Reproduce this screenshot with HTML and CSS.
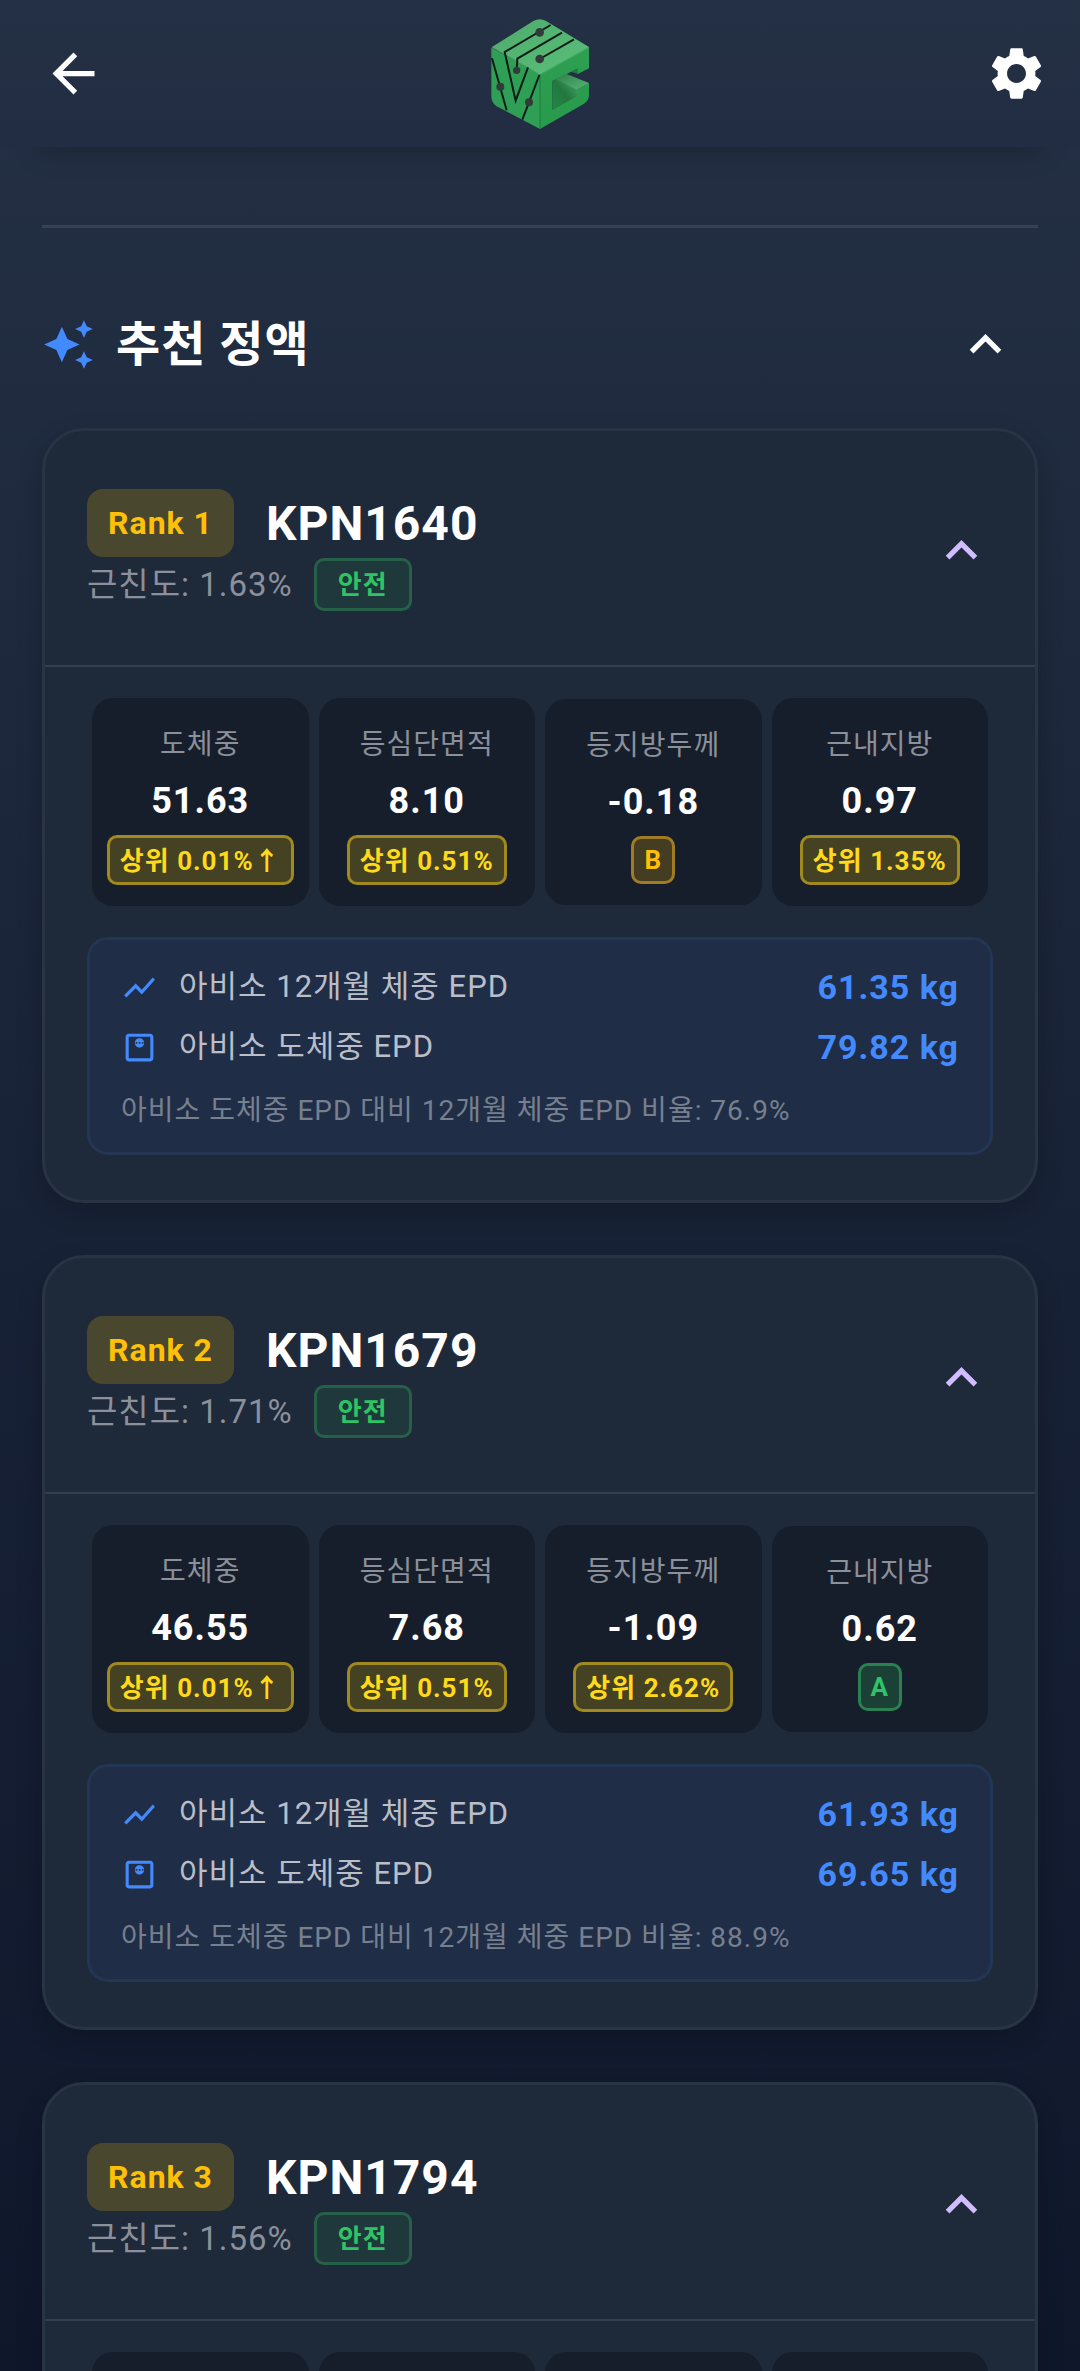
FILE: index.html
```html
<!DOCTYPE html>
<html lang="ko">
<head>
    <meta charset="UTF-8">
    <meta name="viewport" content="width=device-width, initial-scale=1.0">
    <title>추천 정액</title>
    <link rel="stylesheet" href="styles.css">
</head>
<body>
    <!-- shared icons -->
    <svg class="sprite" aria-hidden="true">
        <symbol id="icon-up" viewBox="0 0 24 24">
            <path d="M12 8l-6 6 1.41 1.41L12 10.83l4.59 4.58L18 14z"/>
        </symbol>
        <symbol id="icon-chart" viewBox="0 0 24 24">
            <path d="M3.5 18.49l6-6.01 4 4L22 6.92l-1.41-1.41-7.09 7.97-4-4L2 16.99z"/>
        </symbol>
        <symbol id="icon-weight" viewBox="0 0 24 24">
            <path d="M19 3H5c-1.100 0-2 .9-2 2v14c0 1.100.9 2 2 2h14c1.100 0 2-.9 2-2V5c0-1.100-.9-2-2-2zm0 16H5V5h14v14z"/>
            <path d="M12 6c-1.660 0-3 1.340-3 3s1.340 3 3 3 3-1.340 3-3-1.340-3-3-3zm-1.500 3.500h-1v-1h1v1zm2 0h-1v-1h1v1zm2 0h-1v-1h1v1z"/>
        </symbol>
    </svg>

    <div class="app">
        <header class="topbar">
            <button class="icon-btn back-btn" aria-label="뒤로">
                <svg class="icon" viewBox="0 0 24 24"><path d="M20 11H7.830l5.590-5.590L12 4l-8 8 8 8 1.410-1.410L7.830 13H20v-2z"/></svg>
            </button>

            <svg class="logo" viewBox="63 54 294 330" role="img" aria-label="로고">
                <defs>
                    <linearGradient id="logo-top" x1="0" y1="0" x2="1" y2="1">
                        <stop offset="0" stop-color="#4dab6b"/>
                        <stop offset="1" stop-color="#5cbf7b"/>
                    </linearGradient>
                    <linearGradient id="logo-side" x1="0" y1="0" x2="0" y2="1">
                        <stop offset="0" stop-color="#2f9f52"/>
                        <stop offset="1" stop-color="#289a4c"/>
                    </linearGradient>
                    <linearGradient id="logo-hole" x1="1" y1="0" x2="0" y2="1">
                        <stop offset="0" stop-color="#4aa968"/>
                        <stop offset="0.5" stop-color="#22773f"/>
                        <stop offset="1" stop-color="#1f8a44"/>
                    </linearGradient>
                    <linearGradient id="logo-floor" x1="0" y1="0" x2="1" y2="1">
                        <stop offset="0" stop-color="#2f7f4a"/>
                        <stop offset="1" stop-color="#57b675"/>
                    </linearGradient>
                </defs>
                <!-- faces -->
                <path fill="#2f9f55" d="M64 140L210 220V384L80 316Q64 306 64 286z"/>
                <path fill="url(#logo-top)" d="M66 138L190 60Q210 50 228 60L357 138L210 220z"/>
                <path fill="url(#logo-side)" d="M210 220L357 138V202L322 220V203L247 240V326L320 284V266L357 245V282Q357 298 342 308L210 384z"/>
                <!-- opening -->
                <path fill="url(#logo-hole)" d="M247 240L262 232L322 262V284L247 326z"/>
                <path fill="url(#logo-floor)" d="M258 234L288 218L357 246L320 266z"/>
                <path fill="#1b7d40" d="M303 212L322 203V218z"/>
                <path fill="none" stroke="#5cbf7b" stroke-width="2" d="M66 139L210 220L357 139"/>
                <path fill="none" stroke="#1a7c3d" stroke-width="3" d="M210 221V384"/>
                <!-- circuit lines -->
                <g fill="none" stroke="#0c1d17" stroke-width="6">
                    <path d="M242 72L104 153L137 299L174 199"/>
                    <path d="M276 95L142 173L140 208"/>
                    <path d="M312 115L209 174"/>
                    <path d="M66 172L110 328"/>
                    <path d="M208 222L177 304L157 356"/>
                </g>
                <g fill="#333b3a">
                    <circle cx="209" cy="94" r="13"/>
                    <circle cx="209" cy="174" r="13"/>
                    <circle cx="140" cy="208" r="11"/>
                    <circle cx="91" cy="257" r="12"/>
                    <circle cx="177" cy="304" r="12"/>
                </g>
            </svg>

            <button class="icon-btn settings-btn" aria-label="설정">
                <svg class="icon" viewBox="0 0 24 24"><path d="M19.14 12.94c.04-.3.06-.61.06-.94 0-.32-.02-.64-.07-.94l2.030-1.580c.18-.14.23-.41.12-.61l-1.920-3.320c-.12-.22-.37-.29-.59-.22l-2.390.96c-.5-.38-1.030-.7-1.620-.94l-.36-2.540c-.04-.24-.24-.41-.48-.41h-3.840c-.24 0-.43.17-.47.41l-.36 2.540c-.59.24-1.130.57-1.620.94l-2.390-.96c-.22-.08-.47 0-.59.22L2.740 8.870c-.12.21-.08.47.12.61l2.030 1.580c-.05.3-.09.63-.09.94s.02.64.07.94l-2.030 1.580c-.18.14-.23.41-.12.61l1.920 3.320c.12.22.37.29.59.22l2.390-.96c.5.38 1.030.7 1.620.94l.36 2.540c.05.24.24.41.48.41h3.840c.24 0 .44-.17.47-.41l.36-2.540c.59-.24 1.130-.56 1.620-.94l2.390.96c.22.08.47 0 .59-.22l1.920-3.320c.12-.22.07-.47-.12-.61l-2.010-1.580zM12 15.600c-1.980 0-3.600-1.620-3.600-3.600s1.620-3.600 3.600-3.600 3.600 1.620 3.600 3.600-1.620 3.600-3.600 3.600z"/></svg>
            </button>
        </header>

        <main class="content">
            <hr class="divider">

            <div class="section-header">
                <svg class="sparkle" viewBox="0 0 24 24"><path d="M19 9l1.250-2.750L23 5l-2.750-1.250L19 1l-1.250 2.750L15 5l2.750 1.250L19 9zm-7.500.5L9 4 6.500 9.500 1 12l5.500 2.500L9 20l2.500-5.500L17 12l-5.500-2.500zM19 15l-1.250 2.750L15 19l2.750 1.250L19 23l1.250-2.750L23 19l-2.750-1.250L19 15z"/></svg>
                <h1 class="section-title">추천 정액</h1>
                <button class="icon-btn" aria-label="접기"><svg class="icon"><use href="#icon-up"/></svg></button>
            </div>

            <article class="card">
                <div class="card-header">
                    <div>
                        <div class="rank-row">
                            <span class="rank">Rank 1</span>
                            <h2 class="kpn">KPN1640</h2>
                        </div>
                        <div class="inbreeding">
                            <span>근친도: 1.63%</span>
                            <span class="safe">안전</span>
                        </div>
                    </div>
                    <button class="icon-btn toggle" aria-label="접기"><svg class="icon"><use href="#icon-up"/></svg></button>
                </div>
                <div class="card-body">
                    <div class="stats">
                        <div class="stat">
                            <span class="stat-label">도체중</span>
                            <span class="stat-value">51.63</span>
                            <span class="badge top">상위 0.01%↑</span>
                        </div>
                        <div class="stat">
                            <span class="stat-label">등심단면적</span>
                            <span class="stat-value">8.10</span>
                            <span class="badge top">상위 0.51%</span>
                        </div>
                        <div class="stat">
                            <span class="stat-label">등지방두께</span>
                            <span class="stat-value">-0.18</span>
                            <span class="badge grade-b">B</span>
                        </div>
                        <div class="stat">
                            <span class="stat-label">근내지방</span>
                            <span class="stat-value">0.97</span>
                            <span class="badge top">상위 1.35%</span>
                        </div>
                    </div>
                    <div class="epd">
                        <div class="epd-row">
                            <svg class="epd-icon"><use href="#icon-chart"/></svg>
                            <span class="epd-label">아비소 12개월 체중 EPD</span>
                            <span class="epd-value">61.35 kg</span>
                        </div>
                        <div class="epd-row">
                            <svg class="epd-icon"><use href="#icon-weight"/></svg>
                            <span class="epd-label">아비소 도체중 EPD</span>
                            <span class="epd-value">79.82 kg</span>
                        </div>
                        <p class="epd-note">아비소 도체중 EPD 대비 12개월 체중 EPD 비율: 76.9%</p>
                    </div>
                </div>
            </article>

            <article class="card">
                <div class="card-header">
                    <div>
                        <div class="rank-row">
                            <span class="rank">Rank 2</span>
                            <h2 class="kpn">KPN1679</h2>
                        </div>
                        <div class="inbreeding">
                            <span>근친도: 1.71%</span>
                            <span class="safe">안전</span>
                        </div>
                    </div>
                    <button class="icon-btn toggle" aria-label="접기"><svg class="icon"><use href="#icon-up"/></svg></button>
                </div>
                <div class="card-body">
                    <div class="stats">
                        <div class="stat">
                            <span class="stat-label">도체중</span>
                            <span class="stat-value">46.55</span>
                            <span class="badge top">상위 0.01%↑</span>
                        </div>
                        <div class="stat">
                            <span class="stat-label">등심단면적</span>
                            <span class="stat-value">7.68</span>
                            <span class="badge top">상위 0.51%</span>
                        </div>
                        <div class="stat">
                            <span class="stat-label">등지방두께</span>
                            <span class="stat-value">-1.09</span>
                            <span class="badge top">상위 2.62%</span>
                        </div>
                        <div class="stat">
                            <span class="stat-label">근내지방</span>
                            <span class="stat-value">0.62</span>
                            <span class="badge grade-a">A</span>
                        </div>
                    </div>
                    <div class="epd">
                        <div class="epd-row">
                            <svg class="epd-icon"><use href="#icon-chart"/></svg>
                            <span class="epd-label">아비소 12개월 체중 EPD</span>
                            <span class="epd-value">61.93 kg</span>
                        </div>
                        <div class="epd-row">
                            <svg class="epd-icon"><use href="#icon-weight"/></svg>
                            <span class="epd-label">아비소 도체중 EPD</span>
                            <span class="epd-value">69.65 kg</span>
                        </div>
                        <p class="epd-note">아비소 도체중 EPD 대비 12개월 체중 EPD 비율: 88.9%</p>
                    </div>
                </div>
            </article>

            <article class="card">
                <div class="card-header">
                    <div>
                        <div class="rank-row">
                            <span class="rank">Rank 3</span>
                            <h2 class="kpn">KPN1794</h2>
                        </div>
                        <div class="inbreeding">
                            <span>근친도: 1.56%</span>
                            <span class="safe">안전</span>
                        </div>
                    </div>
                    <button class="icon-btn toggle" aria-label="접기"><svg class="icon"><use href="#icon-up"/></svg></button>
                </div>
                <div class="card-body">
                    <div class="stats">
                        <div class="stat loading"></div>
                        <div class="stat loading"></div>
                        <div class="stat loading"></div>
                        <div class="stat loading"></div>
                    </div>
                </div>
            </article>
        </main>
    </div>
</body>
</html>
```

FILE: styles.css
```css
* {
    margin: 0;
    padding: 0;
    box-sizing: border-box;
}

:root {
    --card: #1e293a;
    --tile: #171e2b;
    --line: #333e4f;
    --blue: #448aff;
    --green: #2ec464;
    --amber: #ffc107;
    --gold: #ffd91a;
    --muted: #8b909a;
}

body {
    font-family: Roboto, "Noto Sans CJK KR", sans-serif;
    letter-spacing: 1px;
    color: white;
}

.sprite {
    display: none;
}

.app {
    height: 100vh;
    display: flex;
    flex-direction: column;
    background: linear-gradient(180deg, #243044, #182236 52%, #0f172b);
}

/* Top bar */
.topbar {
    position: relative;
    z-index: 10;
    flex-shrink: 0;
    display: grid;
    grid-template-columns: 1fr auto 1fr;
    align-items: center;
    height: 147px;
    padding: 0 32px;
    background: linear-gradient(180deg, #243044, #222d43);
    box-shadow: 0 40px 30px -40px rgba(0, 0, 0, 0.3);
}

.icon-btn {
    width: 63px;
    height: 63px;
    border: none;
    background: none;
    color: white;
    cursor: pointer;
}

.icon {
    display: block;
    width: 63px;
    height: 63px;
    fill: currentColor;
}

.back-btn {
    margin-left: 10px;
}

.settings-btn {
    justify-self: end;
}

.logo {
    width: 98px;
    height: 110px;
}

/* Content */
.content {
    flex: 1;
    min-height: 0;
    overflow-y: auto;
    scrollbar-width: none;
    padding: 78px 42px 52px;
}

.divider {
    border: none;
    height: 3px;
    background: #364153;
}

.section-header {
    display: flex;
    align-items: center;
    gap: 21px;
    margin: 85px 0 52px;
    padding-right: 21px;
}

.sparkle {
    width: 53px;
    height: 53px;
    fill: var(--blue);
}

.section-title {
    flex: 1;
    font-size: 48px;
    line-height: 63px;
    font-weight: 700;
}

/* Card */
.card {
    margin-bottom: 52px;
    background: var(--card);
    border: 3px solid #283343;
    border-radius: 42px;
    box-shadow: 0 10px 26px rgba(0, 0, 0, 0.2);
}

.card-header {
    display: flex;
    justify-content: space-between;
    align-items: center;
    padding: 58px 42px 54px;
    border-bottom: 2px solid var(--line);
}

.rank-row {
    display: flex;
    align-items: center;
    gap: 32px;
}

.rank {
    padding: 10px 21px;
    border-radius: 16px;
    background: #4a472f;
    color: var(--amber);
    font-size: 32px;
    line-height: 48px;
    font-weight: 700;
}

.kpn {
    font-size: 48px;
    line-height: 70px;
    margin-bottom: -2px;
    font-weight: 700;
}

.inbreeding {
    display: flex;
    align-items: center;
    gap: 21px;
    margin-top: 1px;
    color: var(--muted);
    font-size: 33px;
    line-height: 53px;
}

.safe {
    padding: 6px 21px 4px;
    border: 3px solid #276049;
    border-radius: 10px;
    background: #1f383b;
    color: var(--green);
    font-size: 26px;
    line-height: 37px;
    font-weight: 700;
}

.toggle {
    color: #d0bcff;
}

.card-body {
    padding: 31px 42px 45px;
}

/* Stat tiles */
.stats {
    display: flex;
    align-items: center;
}

.stat {
    flex: 1;
    display: flex;
    flex-direction: column;
    align-items: center;
    gap: 7px;
    margin: 0 5px;
    padding: 24px 0 21px;
    border-radius: 21px;
    background: var(--tile);
}

.stat.loading {
    min-height: 208px;
}

.stat-label {
    color: var(--muted);
    font-size: 28px;
    line-height: 45px;
}

.stat-value {
    font-size: 36px;
    line-height: 54px;
    font-weight: 700;
}

.badge {
    padding: 4px 10px;
    border: 3px solid;
    border-radius: 10px;
    font-size: 26px;
    line-height: 34px;
    font-weight: 700;
}

.badge.top {
    padding: 6px 10px 4px;
    border-color: #a08a20;
    background: #454123;
    color: var(--gold);
}

.badge.grade-a {
    border-color: #2a8050;
    background: #1b4136;
    color: var(--green);
}

.badge.grade-b {
    border-color: #a07c24;
    background: #453d22;
    color: var(--amber);
}

/* EPD summary */
.epd {
    margin-top: 31px;
    padding: 22px 31px 20px;
    border: 3px solid #233653;
    border-radius: 21px;
    background: #202d46;
}

.epd-row {
    display: flex;
    align-items: center;
    gap: 21px;
    margin-bottom: 10px;
}

.epd-icon {
    width: 37px;
    height: 37px;
    fill: var(--blue);
}

.epd-label {
    flex: 1;
    color: #b9bec8;
    font-size: 31px;
    line-height: 50px;
}

.epd-value {
    color: var(--blue);
    font-size: 34px;
    line-height: 50px;
    font-weight: 700;
}

.epd-note {
    margin-top: 18px;
    color: #76808f;
    font-size: 28px;
    line-height: 42px;
}
```
